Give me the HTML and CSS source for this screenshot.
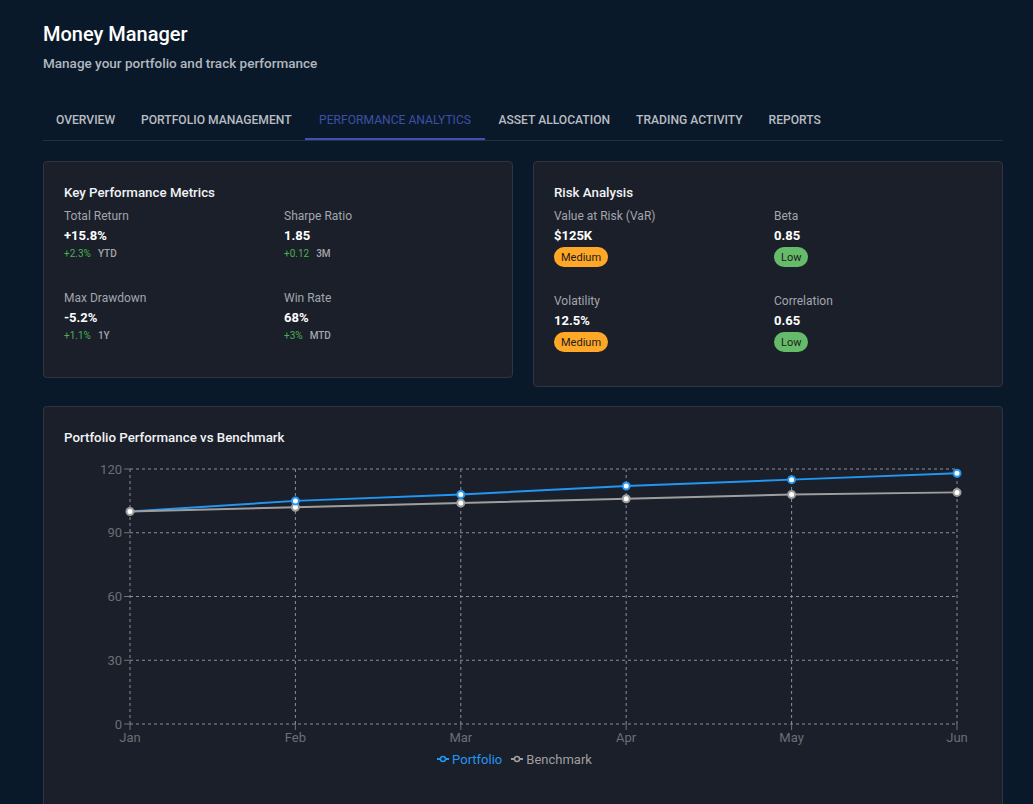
FILE: index.html
```html
<!DOCTYPE html>
<html lang="en">
<head>
<meta charset="utf-8">
<title>Money Manager</title>
<link rel="stylesheet" href="styles.css">
</head>
<body>
<div class="page">
  <header class="head">
    <h1 class="title">Money Manager</h1>
    <p class="subtitle">Manage your portfolio and track performance</p>
  </header>

  <nav class="tabs">
    <div class="tab">Overview</div>
    <div class="tab">Portfolio Management</div>
    <div class="tab active">Performance Analytics</div>
    <div class="tab">Asset Allocation</div>
    <div class="tab">Trading Activity</div>
    <div class="tab">Reports</div>
  </nav>

  <div class="cards">
    <section class="card">
      <h2 class="card-title">Key Performance Metrics</h2>
      <div class="metrics metrics-perf">
        <div class="metric">
          <div class="m-label">Total Return</div>
          <div class="m-value">+15.8%</div>
          <div class="m-change"><span class="up">+2.3%</span><span class="period">YTD</span></div>
        </div>
        <div class="metric">
          <div class="m-label">Sharpe Ratio</div>
          <div class="m-value">1.85</div>
          <div class="m-change"><span class="up">+0.12</span><span class="period">3M</span></div>
        </div>
        <div class="metric">
          <div class="m-label">Max Drawdown</div>
          <div class="m-value">-5.2%</div>
          <div class="m-change"><span class="up">+1.1%</span><span class="period">1Y</span></div>
        </div>
        <div class="metric">
          <div class="m-label">Win Rate</div>
          <div class="m-value">68%</div>
          <div class="m-change"><span class="up">+3%</span><span class="period">MTD</span></div>
        </div>
      </div>
    </section>

    <section class="card">
      <h2 class="card-title">Risk Analysis</h2>
      <div class="metrics metrics-risk">
        <div class="metric">
          <div class="m-label">Value at Risk (VaR)</div>
          <div class="m-value">$125K</div>
          <div class="badge-row"><span class="badge medium">Medium</span></div>
        </div>
        <div class="metric">
          <div class="m-label">Beta</div>
          <div class="m-value">0.85</div>
          <div class="badge-row"><span class="badge low">Low</span></div>
        </div>
        <div class="metric">
          <div class="m-label">Volatility</div>
          <div class="m-value">12.5%</div>
          <div class="badge-row"><span class="badge medium">Medium</span></div>
        </div>
        <div class="metric">
          <div class="m-label">Correlation</div>
          <div class="m-value">0.65</div>
          <div class="badge-row"><span class="badge low">Low</span></div>
        </div>
      </div>
    </section>
  </div>

  <section class="card chart-card">
    <h2 class="card-title">Portfolio Performance vs Benchmark</h2>
    <svg class="chart" width="918" height="295" viewBox="0 0 918 295" xmlns="http://www.w3.org/2000/svg">
      <g class="grid" stroke="#8d9098" stroke-width="1" stroke-dasharray="3 3" fill="none">
        <line x1="66" y1="17" x2="893" y2="17"/>
        <line x1="66" y1="80.75" x2="893" y2="80.75"/>
        <line x1="66" y1="144.5" x2="893" y2="144.5"/>
        <line x1="66" y1="208.25" x2="893" y2="208.25"/>
        <line x1="66" y1="272" x2="893" y2="272"/>
        <line x1="66" y1="17" x2="66" y2="272"/>
        <line x1="231.4" y1="17" x2="231.4" y2="272"/>
        <line x1="396.8" y1="17" x2="396.8" y2="272"/>
        <line x1="562.2" y1="17" x2="562.2" y2="272"/>
        <line x1="727.6" y1="17" x2="727.6" y2="272"/>
        <line x1="893" y1="17" x2="893" y2="272"/>
      </g>
      <g stroke="#70737a" stroke-width="1">
        <line x1="60" y1="17" x2="66" y2="17"/>
        <line x1="60" y1="80.75" x2="66" y2="80.75"/>
        <line x1="60" y1="144.5" x2="66" y2="144.5"/>
        <line x1="60" y1="208.25" x2="66" y2="208.25"/>
        <line x1="60" y1="272" x2="66" y2="272"/>
        <line x1="66" y1="272" x2="66" y2="278"/>
        <line x1="231.4" y1="272" x2="231.4" y2="278"/>
        <line x1="396.8" y1="272" x2="396.8" y2="278"/>
        <line x1="562.2" y1="272" x2="562.2" y2="278"/>
        <line x1="727.6" y1="272" x2="727.6" y2="278"/>
        <line x1="893" y1="272" x2="893" y2="278"/>
      </g>
      <g class="ticks" text-anchor="end">
        <text x="58" y="21.5">120</text>
        <text x="58" y="85.25">90</text>
        <text x="58" y="149">60</text>
        <text x="58" y="212.75">30</text>
        <text x="58" y="276.5">0</text>
      </g>
      <g class="ticks" text-anchor="middle">
        <text x="66" y="289.5">Jan</text>
        <text x="231.4" y="289.5">Feb</text>
        <text x="396.8" y="289.5">Mar</text>
        <text x="562.2" y="289.5">Apr</text>
        <text x="727.6" y="289.5">May</text>
        <text x="893" y="289.5">Jun</text>
      </g>
      <polyline fill="none" stroke="#2196f3" stroke-width="2" points="66,59.5 231.4,48.875 396.8,42.5 562.2,34 727.6,27.625 893,21.25"/>
      <polyline fill="none" stroke="#9e9e9e" stroke-width="2" points="66,59.5 231.4,55.25 396.8,51 562.2,46.75 727.6,42.5 893,40.375"/>
      <g fill="#ffffff" stroke="#9e9e9e" stroke-width="2">
        <circle cx="231.4" cy="55.25" r="3.5"/>
        <circle cx="396.8" cy="51" r="3.5"/>
        <circle cx="562.2" cy="46.75" r="3.5"/>
        <circle cx="727.6" cy="42.5" r="3.5"/>
        <circle cx="893" cy="40.375" r="3.5"/>
      </g>
      <g fill="#ffffff" stroke="#2196f3" stroke-width="2">
        <circle cx="231.4" cy="48.875" r="3.5"/>
        <circle cx="396.8" cy="42.5" r="3.5"/>
        <circle cx="562.2" cy="34" r="3.5"/>
        <circle cx="727.6" cy="27.625" r="3.5"/>
        <circle cx="893" cy="21.25" r="3.5"/>
      </g>
      <circle cx="66" cy="59.5" r="3.5" fill="#ffffff" stroke="#9e9e9e" stroke-width="2"/>
    </svg>
    <div class="legend">
      <span class="legend-item portfolio">
        <svg width="12" height="10" viewBox="0 0 12 10"><line x1="0" y1="5" x2="12" y2="5" stroke="#2196f3" stroke-width="2"/><circle cx="6" cy="5" r="2.5" fill="#1b1f2a" stroke="#2196f3" stroke-width="1.5"/></svg>
        Portfolio
      </span>
      <span class="legend-item bench">
        <svg width="12" height="10" viewBox="0 0 12 10"><line x1="0" y1="5" x2="12" y2="5" stroke="#9e9e9e" stroke-width="2"/><circle cx="6" cy="5" r="2.5" fill="#1b1f2a" stroke="#9e9e9e" stroke-width="1.5"/></svg>
        Benchmark
      </span>
    </div>
  </section>
</div>
</body>
</html>
```

FILE: styles.css
```css
* { box-sizing: border-box; }

html, body {
  margin: 0;
  padding: 0;
  background: #0a1929;
}

body {
  font-family: Roboto, "Liberation Sans", Arial, sans-serif;
  color: #ffffff;
}

.page {
  width: 1033px;
  padding: 22px 30px 0 43px;
}

.title {
  margin: 0;
  font-size: 20px;
  line-height: 24px;
  font-weight: 500;
  color: #ffffff;
}

.subtitle {
  margin: 8px 0 0;
  font-size: 13.5px;
  line-height: 18px;
  font-weight: 500;
  color: #b1b7bf;
}

.tabs {
  display: flex;
  margin-top: 26px;
  height: 43px;
  border-bottom: 1px solid #26303d;
}

.tab {
  position: relative;
  height: 42px;
  padding: 2px 13px 0;
  display: flex;
  align-items: center;
  font-size: 12.1px;
  font-weight: 500;
  text-transform: uppercase;
  color: #b9bdc3;
  white-space: nowrap;
}

.tab.active {
  padding: 2px 14.5px 0;
  color: #3d4fa5;
  font-weight: 400;
}

.tab.active::after {
  content: "";
  position: absolute;
  left: 0;
  right: 0;
  bottom: 0;
  height: 2px;
  background: #3f51b5;
}

.cards {
  display: flex;
  align-items: flex-start;
  gap: 20px;
  margin-top: 20px;
}

.card {
  background: #1b1f2a;
  border: 1px solid #2e3440;
  border-radius: 4px;
  padding: 21px 20px 20px;
}

.cards .card {
  flex: 1 1 0;
}

.card-title {
  margin: 0 0 4px;
  font-size: 13.3px;
  line-height: 20px;
  font-weight: 500;
  color: #f1f3f5;
}

.metrics {
  display: grid;
  grid-template-columns: 208px 208px;
  column-gap: 12px;
}

.metrics-perf { row-gap: 14px; }
.metrics-risk { row-gap: 11px; }

.metric {
  padding-bottom: 14px;
}

.m-label {
  font-size: 12px;
  line-height: 18px;
  color: #a2a6ad;
}

.m-value {
  font-size: 13px;
  line-height: 22px;
  font-weight: 700;
  color: #ffffff;
}

.m-change {
  display: flex;
  gap: 7px;
  font-size: 10px;
  line-height: 14px;
}

.up {
  color: #4caf50;
}

.period {
  color: #a2a6ad;
  font-weight: 500;
}

.badge-row {
  display: flex;
  height: 20px;
}

.badge {
  display: inline-flex;
  align-items: center;
  height: 20px;
  padding: 0 7px;
  border-radius: 10px;
  font-size: 11px;
  color: #1c1c1c;
}

.badge.medium { background: #ffa726; }
.badge.low { background: #66bb6a; }

.chart-card {
  margin-top: 19px;
  padding-bottom: 60px;
}

.chart {
  display: block;
  margin-top: 4px;
}

.ticks text {
  font-family: Roboto, "Liberation Sans", Arial, sans-serif;
  font-size: 13px;
  fill: #6b6e75;
}

.legend {
  display: flex;
  justify-content: center;
  gap: 9px;
  padding-right: 17px;
  height: 24px;
  align-items: center;
  font-size: 13px;
}

.legend-item {
  display: inline-flex;
  align-items: center;
  gap: 3px;
}

.legend-item.portfolio { color: #2196f3; }
.legend-item.bench { color: #9e9e9e; }
```
